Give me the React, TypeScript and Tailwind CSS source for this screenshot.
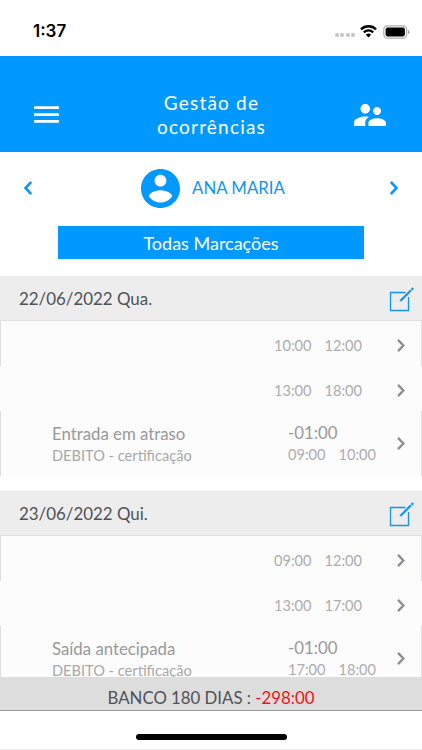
type Entry = {
  start: string;
  end: string;
  title?: string;
  detail?: string;
  balance?: string;
};

type Day = {
  label: string;
  entries: Entry[];
};

const days: Day[] = [
  {
    label: "22/06/2022 Qua.",
    entries: [
      { start: "10:00", end: "12:00" },
      { start: "13:00", end: "18:00" },
      {
        start: "09:00",
        end: "10:00",
        title: "Entrada em atraso",
        detail: "DEBITO - certificação",
        balance: "-01:00",
      },
    ],
  },
  {
    label: "23/06/2022 Qui.",
    entries: [
      { start: "09:00", end: "12:00" },
      { start: "13:00", end: "17:00" },
      {
        start: "17:00",
        end: "18:00",
        title: "Saída antecipada",
        detail: "DEBITO - certificação",
        balance: "-01:00",
      },
    ],
  },
];

function Chevron({ className, left }: { className: string; left?: boolean }) {
  return (
    <svg viewBox="0 0 8 14" fill="none" stroke="currentColor" className={className}>
      <path d={left ? "M7.2 1 1.5 7 7.2 13" : "M0.8 1 6.5 7 0.8 13"} strokeWidth="2.6" />
    </svg>
  );
}

function EditIcon() {
  return (
    <svg viewBox="0 0 25 25" fill="none" stroke="#1493f5" className="h-[25px] w-[25px] shrink-0">
      <path d="M16.5 5.5H1.5v18h18v-13.5" strokeWidth="1.3" />
      <path d="M11.3 14 22 3.3" strokeWidth="2.2" />
      <path d="M22.5 2.8 24.2 1.1" strokeWidth="2.2" />
    </svg>
  );
}

function StatusBar() {
  return (
    <div className="flex h-14 shrink-0 items-center pt-[7px] pr-[12px] pl-[33px]">
      <span className="flex-1 font-['Inter'] text-[17px] font-semibold text-black">1:37</span>
      <div className="flex gap-[1.5px] pt-[7px]">
        <i className="h-[4px] w-[4px] rounded-full bg-[#c4c4c4]" />
        <i className="h-[4px] w-[4px] rounded-full bg-[#c4c4c4]" />
        <i className="h-[4px] w-[4px] rounded-full bg-[#c4c4c4]" />
        <i className="h-[4px] w-[4px] rounded-full bg-[#c4c4c4]" />
      </div>
      <svg viewBox="0 0 17 13" fill="none" stroke="#000" className="ml-[5px] h-[13px] w-[17px]">
        <path d="M1 4.4a10.7 10.7 0 0 1 15 0" strokeWidth="2.5" />
        <path d="M3.8 7.4a6.7 6.7 0 0 1 9.4 0" strokeWidth="2.2" />
        <path d="M8.5 12.4 5.9 9.8a3.7 3.7 0 0 1 5.2 0z" fill="#000" stroke="none" />
      </svg>
      <svg viewBox="0 0 27 14" className="ml-[6px] h-[14px] w-[27px]">
        <rect x="0.8" y="0.8" width="22.9" height="12.4" rx="3.6" fill="#fff" stroke="#b0b0b0" strokeWidth="1.2" />
        <rect x="2.6" y="2.6" width="19.3" height="8.8" rx="1.8" />
        <path d="M25 5v4.2c.8-.3 1.4-1.1 1.4-2.1S25.8 5.3 25 5z" fill="#999" />
      </svg>
    </div>
  );
}

function Header() {
  return (
    <header className="flex h-24 shrink-0 items-center bg-[#0199ff] pt-[21px] pr-[33px] pl-[30px] text-white">
      <svg viewBox="0 0 24 24" fill="currentColor" className="h-[33px] w-[33px]">
        <path d="M3 18h18v-2H3v2zm0-5h18v-2H3v2zm0-7v2h18V6H3z" />
      </svg>
      <h1 className="flex-1 pl-[9px] text-center text-[19px] leading-6 tracking-[1.2px]">
        Gestão de
        <br />
        ocorrências
      </h1>
      <svg viewBox="0 0 24 24" fill="currentColor" className="h-[38px] w-[38px]">
        <path d="M16.5 12c1.38 0 2.49-1.12 2.49-2.5S17.88 7 16.5 7 14 8.12 14 9.5s1.12 2.5 2.5 2.5zM9 11c1.66 0 2.99-1.34 2.99-3S10.66 5 9 5 6 6.34 6 8s1.34 3 3 3zm7.5 3c-1.83 0-5.5.92-5.5 2.75V19h11v-2.25c0-1.83-3.67-2.75-5.5-2.75zM9 13c-2.33 0-7 1.17-7 3.5V19h7v-2.25c0-.85.33-2.34 2.37-3.47C10.5 13.1 9.66 13 9 13z" />
      </svg>
    </header>
  );
}

function PersonPicker() {
  return (
    <div className="flex h-[74px] shrink-0 items-center justify-between px-6 pb-[2px] text-[#0f95f5]">
      <Chevron left className="h-[14px] w-[8px]" />
      <div className="flex items-center gap-[12px] pl-[4px]">
        <svg viewBox="2 2 20 20" fill="#0199ff" className="h-[39px] w-[39px]">
          <path d="M12 2C6.48 2 2 6.48 2 12s4.48 10 10 10 10-4.48 10-10S17.52 2 12 2zm0 3c1.66 0 3 1.34 3 3s-1.34 3-3 3-3-1.34-3-3 1.34-3 3-3zm0 14.2c-2.5 0-4.71-1.28-6-3.22.03-1.99 4-3.08 6-3.08 1.99 0 5.97 1.09 6 3.08-1.29 1.94-3.5 3.22-6 3.22z" />
        </svg>
        <span className="text-[16.8px]">ANA MARIA</span>
      </div>
      <Chevron className="h-[14px] w-[8px]" />
    </div>
  );
}

function EntryRow({ entry }: { entry: Entry }) {
  if (entry.title) {
    return (
      <div className="flex h-[65px] items-center border-x border-[#dedede] pr-[16px] pl-[51px] text-[#999]">
        <div className="w-[236px] pt-[3px]">
          <div className="text-[16.8px] leading-[22px]">{entry.title}</div>
          <div className="text-[14.6px] leading-[22px] text-[#a8a8a8]">{entry.detail}</div>
        </div>
        <div className="flex-1 pt-px">
          <div className="text-[16.8px] leading-[22px]">{entry.balance}</div>
          <div className="flex gap-[13px] text-[14.6px] leading-[22px] text-[#adadad]">
            <span>{entry.start}</span>
            <span>{entry.end}</span>
          </div>
        </div>
        <Chevron className="h-[13px] w-[8px] text-[#8b9196]" />
      </div>
    );
  }

  return (
    <div className="flex h-[45px] items-center border-x border-transparent pt-[3px] pr-[16px] text-[#adadad] first:border-[#dedede]">
      <div className="flex flex-1 justify-end gap-[13px] pt-[2px] pr-[35px] text-[14.6px]">
        <span>{entry.start}</span>
        <span>{entry.end}</span>
      </div>
      <Chevron className="h-[13px] w-[8px] text-[#8b9196]" />
    </div>
  );
}

function DaySection({ day }: { day: Day }) {
  return (
    <section>
      <div className="flex h-[45px] items-center justify-between border-b border-[#e0e0e0] bg-[#ededed] pt-[2px] pr-2 pl-[19px] text-[16.9px] text-[#4f5355]">
        {day.label}
        <EditIcon />
      </div>
      <div className="rounded-t bg-[#fcfcfc]">
        {day.entries.map((entry) => (
          <EntryRow key={entry.start} entry={entry} />
        ))}
      </div>
    </section>
  );
}

export default function App() {
  return (
    <div className="flex h-[750px] w-[422px] flex-col overflow-hidden bg-white font-['Lato',sans-serif] whitespace-nowrap">
      <StatusBar />
      <Header />
      <PersonPicker />

      <button className="mx-[58px] h-[33px] shrink-0 bg-[#0199ff] pt-[2px] text-[18px] text-white">
        Todas Marcações
      </button>

      {/* Day list */}
      <main className="mt-[17px] flex min-h-0 flex-1 flex-col gap-[15px] overflow-hidden">
        {days.map((day) => (
          <DaySection key={day.label} day={day} />
        ))}
      </main>

      {/* Balance */}
      <footer className="h-[34px] shrink-0 border-b border-[#999] bg-[#ddd] pt-px text-center text-[16.8px] leading-[40px] text-[#4f5355]">
        BANCO 180 DIAS : <span className="text-[#f01414]">-298:00</span>
      </footer>
      <div className="flex h-[39px] shrink-0 items-end justify-center border-b border-[#eee] pb-[9px]">
        <div className="h-[6px] w-[151px] rounded-full bg-black" />
      </div>
    </div>
  );
}
